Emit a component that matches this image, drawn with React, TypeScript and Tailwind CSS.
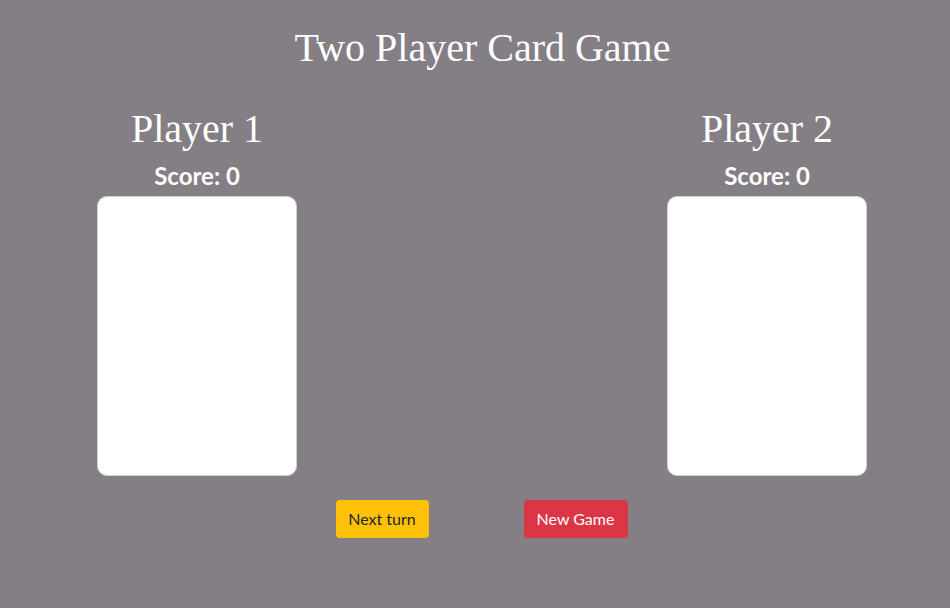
import React from "react";

function PlayerColumn({ name }: { name: string }) {
  return (
    <div className="flex w-[200px] flex-col items-center">
      <h2 className="whitespace-nowrap text-[40px] leading-[48px] text-white [font-family:'Liberation_Serif',serif]">
        {name}
      </h2>
      <h4 className="mt-[8px] text-[24px] font-bold leading-[29px] text-white [font-family:Lato,sans-serif]">
        Score: 0
      </h4>
      <div className="mt-[6px] h-[280px] w-[200px] rounded-[10px] border border-[#d0d0d4] bg-white" />
    </div>
  );
}

export default function App() {
  return (
    <div className="min-h-[608px] w-full bg-[#847e85] pl-[15px]">
      <h1 className="pt-[24px] text-center text-[40px] leading-[48px] text-white [font-family:'Liberation_Serif',serif]">
        Two Player Card Game
      </h1>
      <div className="mt-[33px] flex justify-between pl-[82px] pr-[83px]">
        <PlayerColumn name="Player 1" />
        <PlayerColumn name="Player 2" />
      </div>
      <div className="mt-[24px] flex justify-center gap-[95px] pr-[2px] [font-family:Lato,sans-serif]">
        <button className="h-[38px] w-[93px] rounded-[4px] bg-[#ffc107] text-[16px] text-[#212529]">
          Next turn
        </button>
        <button className="h-[38px] w-[104px] rounded-[4px] bg-[#dc3545] text-[16px] text-white">
          New Game
        </button>
      </div>
    </div>
  );
}
